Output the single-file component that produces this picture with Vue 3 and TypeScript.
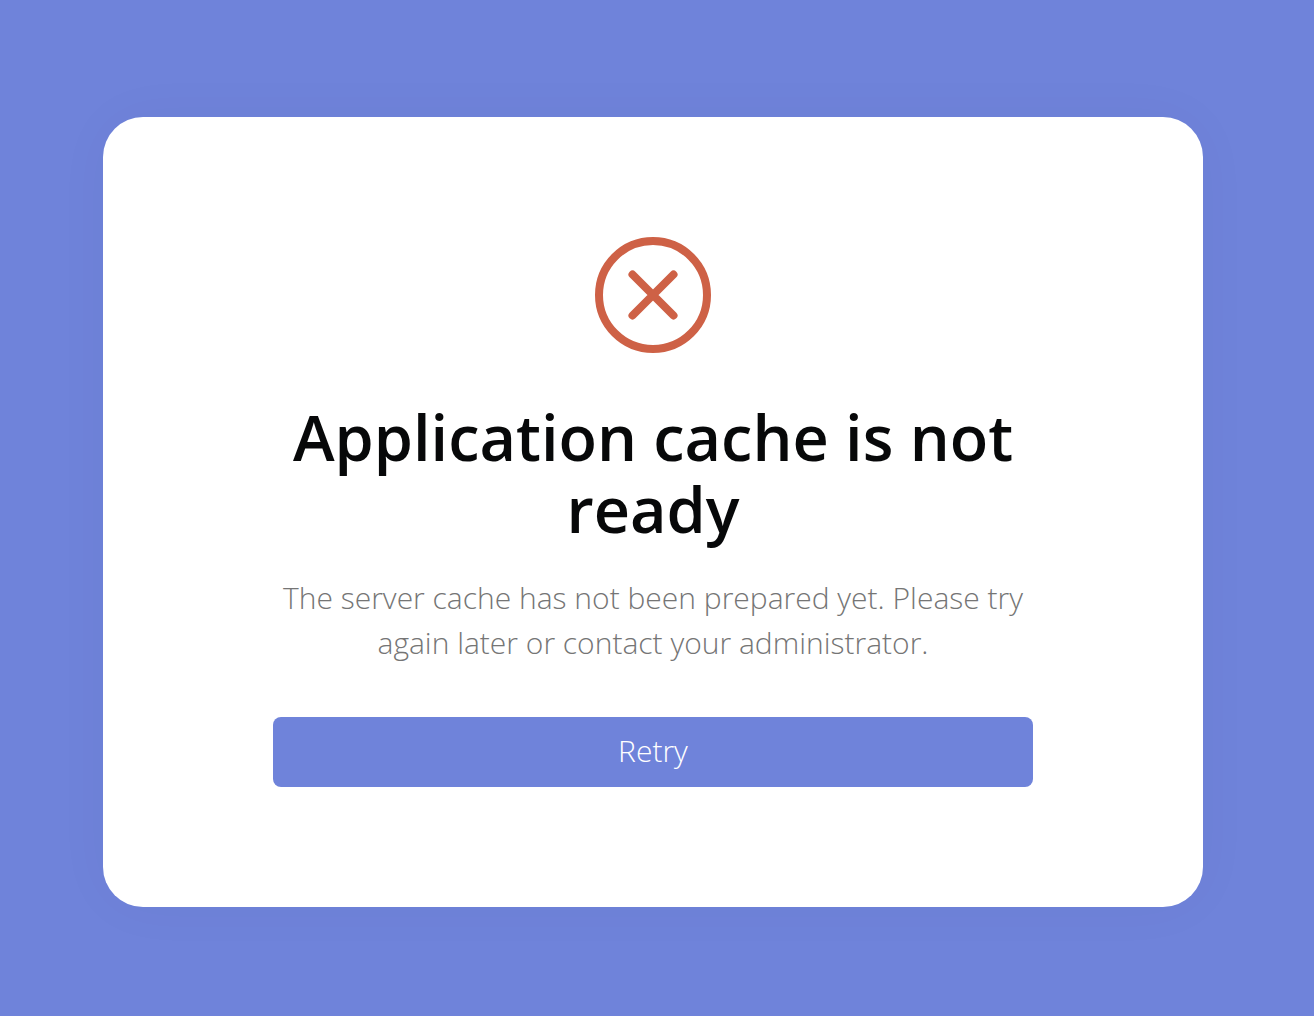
<script setup lang="ts">
const title: string = 'Application cache is not ready'
const message: string =
  'The server cache has not been prepared yet. Please try again later or contact your administrator.'

function retry(): void {
  window.location.reload()
}
</script>

<template>
  <main class="page">
    <section class="card" role="alert">
      <svg class="icon" viewBox="0 0 116 116" aria-hidden="true">
        <circle cx="58" cy="58" r="54" />
        <path d="M37.5 37.5 78.5 78.5M78.5 37.5 37.5 78.5" />
      </svg>
      <h1 class="title">{{ title }}</h1>
      <p class="message">{{ message }}</p>
      <button class="retry" type="button" @click="retry">Retry</button>
    </section>
  </main>
</template>

<style>
body {
  margin: 0;
  background: #6f83da;
}
</style>

<style scoped>
.page {
  box-sizing: border-box;
  display: flex;
  align-items: center;
  justify-content: center;
  min-height: 100vh;
  padding: 32px 40px 24px 32px;
  font-family: 'Open Sans', Lato, sans-serif;
}

.card {
  box-sizing: border-box;
  display: flex;
  flex-direction: column;
  align-items: center;
  width: 100%;
  max-width: 1100px;
  padding: 120px 170px;
  border-radius: 40px;
  background: #fff;
  box-shadow: 0 0 60px rgba(0, 0, 0, 0.03);
}

.icon {
  width: 116px;
  height: 116px;
  fill: none;
  stroke: #ce6146;
  stroke-width: 8px;
  stroke-linecap: round;
}

.title {
  margin: 48px 0 0;
  color: #070809;
  font-size: 63px;
  font-weight: 650;
  line-height: 72px;
  text-align: center;
}

.message {
  margin: 30px 0 0;
  color: #757575;
  font-size: 30px;
  font-weight: 300;
  line-height: 45px;
  text-align: center;
}

.retry {
  width: 100%;
  height: 70px;
  margin: 52px 0 0;
  padding: 0 0 2px;
  border: 0;
  border-radius: 8px;
  background: #6f83da;
  color: #fff;
  font-family: inherit;
  font-size: 30px;
  font-weight: 300;
  line-height: 40px;
  cursor: pointer;
}
</style>
